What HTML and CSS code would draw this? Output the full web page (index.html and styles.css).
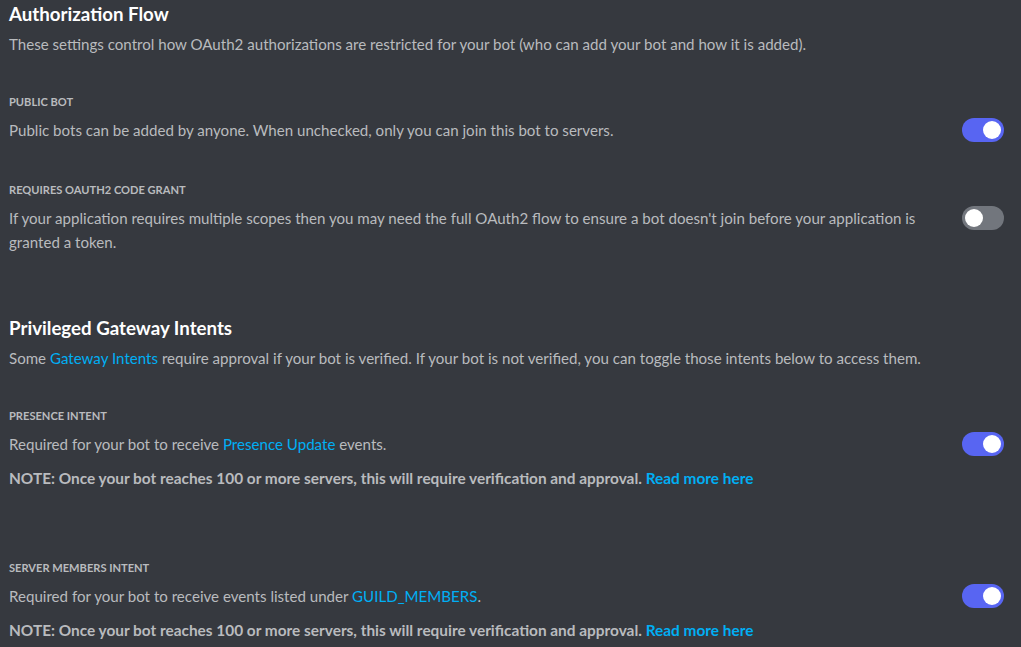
FILE: index.html
```html
<!DOCTYPE html>
<html>
<head>
<meta charset="utf-8">
<link rel="stylesheet" href="styles.css">
</head>
<body>
<main class="page">
  <section class="section">
    <h2 class="section-title">Authorization Flow</h2>
    <p class="section-desc">These settings control how OAuth2 authorizations are restricted for your bot (who can add your bot and how it is added).</p>

    <div class="setting setting-first">
      <h3 class="setting-label">Public Bot</h3>
      <div class="setting-row">
        <p class="setting-text">Public bots can be added by anyone. When unchecked, only you can join this bot to servers.</p>
        <span class="toggle on"><span class="knob"></span></span>
      </div>
    </div>

    <div class="setting">
      <h3 class="setting-label">Requires OAuth2 Code Grant</h3>
      <div class="setting-row">
        <p class="setting-text">If your application requires multiple scopes then you may need the full OAuth2 flow to ensure a bot doesn't join before your application is granted a token.</p>
        <span class="toggle"><span class="knob"></span></span>
      </div>
    </div>
  </section>

  <section class="section section-second">
    <h2 class="section-title">Privileged Gateway Intents</h2>
    <p class="section-desc">Some <a class="link">Gateway Intents</a> require approval if your bot is verified. If your bot is not verified, you can toggle those intents below to access them.</p>

    <div class="setting setting-first">
      <h3 class="setting-label">Presence Intent</h3>
      <div class="setting-row">
        <p class="setting-text">Required for your bot to receive <a class="link">Presence Update</a> events.</p>
        <span class="toggle on"><span class="knob"></span></span>
      </div>
      <p class="note">NOTE: Once your bot reaches 100 or more servers, this will require verification and approval. <a class="link">Read more here</a></p>
    </div>

    <div class="setting setting-intent">
      <h3 class="setting-label">Server Members Intent</h3>
      <div class="setting-row">
        <p class="setting-text">Required for your bot to receive events listed under <a class="link">GUILD_MEMBERS</a>.</p>
        <span class="toggle on"><span class="knob"></span></span>
      </div>
      <p class="note">NOTE: Once your bot reaches 100 or more servers, this will require verification and approval. <a class="link">Read more here</a></p>
    </div>
  </section>
</main>
</body>
</html>
```

FILE: styles.css
```css
html, body {
  margin: 0;
  padding: 0;
  background: #36393f;
}

body {
  font-family: Lato, "Noto Sans", sans-serif;
  color: #b9bbbe;
  overflow: hidden;
}

.page {
  padding: 2px 17px 0 9px;
}

.section-title {
  margin: 0;
  font-size: 18.7px;
  line-height: 24px;
  font-weight: 700;
  color: #ffffff;
}

.section-desc {
  margin: 6px 0 0;
  font-size: 15.1px;
  line-height: 24px;
}

.section-second {
  margin-top: 62px;
}

.setting {
  margin-top: 40px;
}

.setting-first {
  margin-top: 38px;
}

.setting-intent {
  margin-top: 70px;
}

.setting-label {
  margin: 0;
  font-size: 11.1px;
  line-height: 16px;
  font-weight: 700;
  text-transform: uppercase;
  color: #b9bbbe;
}

.setting-row {
  display: flex;
  align-items: flex-start;
  justify-content: space-between;
  gap: 40px;
  margin-top: 8px;
}

.setting-text {
  margin: 0;
  font-size: 15.1px;
  line-height: 24px;
  max-width: 912px;
}

.note {
  margin: 10px 0 0;
  font-size: 15.4px;
  line-height: 24px;
  font-weight: 700;
}

.link {
  color: #00aff4;
  text-decoration: none;
}

.toggle {
  flex: none;
  position: relative;
  width: 42px;
  height: 24px;
  border-radius: 12px;
  background: #72767d;
}

.toggle.on {
  background: #5865f2;
}

.knob {
  position: absolute;
  top: 3px;
  left: 3px;
  width: 18px;
  height: 18px;
  border-radius: 50%;
  background: #ffffff;
}

.toggle.on .knob {
  left: auto;
  right: 3px;
}
```
